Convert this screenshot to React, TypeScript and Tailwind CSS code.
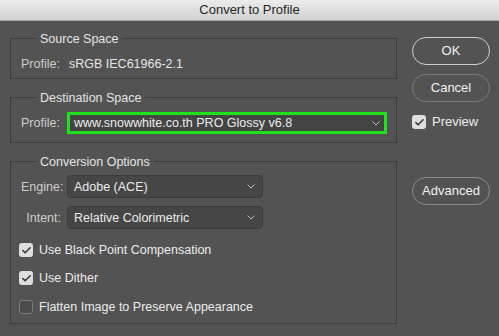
import { Check } from "lucide-react";

function Chevron() {
  return (
    <svg width="8" height="5" viewBox="0 0 8 5" className="shrink-0">
      <polyline points="0.5,0.5 4,4 7.5,0.5" fill="none" stroke="#bdbdbd" strokeWidth="1" />
    </svg>
  );
}

function Select({ value, width, highlight }: { value: string; width: string; highlight?: boolean }) {
  return (
    <div
      className={
        highlight
          ? `flex h-[22px] ${width} items-center justify-between border-[3px] border-[#1fe21f] bg-[#444444] pl-[4px] pr-[4px]`
          : `flex h-[23px] ${width} items-center justify-between rounded-[4px] border border-[#3b3b3b] bg-[#464646] pl-[6px] pr-[7px]`
      }
    >
      <span className="text-[#ececec]">{value}</span>
      <Chevron />
    </div>
  );
}

function CheckBox({ checked }: { checked: boolean }) {
  return checked ? (
    <span className="flex h-[14px] w-[14px] items-center justify-center rounded-[3px] bg-[#dedede]">
      <Check size={11} strokeWidth={3.5} color="#3a3a3a" />
    </span>
  ) : (
    <span className="h-[14px] w-[14px] rounded-[3px] border border-[#7c7c7c] bg-[#4b4b4b]" />
  );
}

function Group({ title, className, children }: { title: string; className: string; children: React.ReactNode }) {
  return (
    <fieldset className={`w-[387px] border border-[#3d3d3d] pl-[10px] ${className}`}>
      <legend className="ml-[15px] px-[4px] leading-[16px] text-[#e4e4e4]">
        <span className="relative top-[1px]">{title}</span>
      </legend>
      {children}
    </fieldset>
  );
}

const buttons = "flex h-[28px] w-[78px] items-center justify-center rounded-full text-[13px] text-[#f2f2f2]";

export default function App() {
  return (
    <div className="h-[336px] w-[499px] overflow-hidden bg-[#535353] text-[12.5px] leading-[16px] font-['Liberation_Sans',Arial,sans-serif]">
      <div className="flex h-[21px] items-center justify-center border-b border-[#a8a8a8] bg-gradient-to-b from-[#ececec] to-[#d2d2d2] text-[13px] text-[#262626]">
        Convert to Profile
      </div>
      <div className="flex">
        <div className="ml-[10px] flex flex-col">
          <Group title="Source Space" className="mt-[9px] pt-[10px] pb-[6px]">
            <div className="flex">
              <span className="w-[40px] text-[#cdcdcd]">Profile:</span>
              <span className="ml-[8px] text-[#e6e6e6]">sRGB IEC61966-2.1</span>
            </div>
          </Group>
          <Group title="Destination Space" className="mt-[10px] pt-[7px] pb-[8px]">
            <div className="flex items-center gap-[6px]">
              <span className="w-[40px] text-[#cdcdcd]">Profile:</span>
              <Select value="www.snowwhite.co.th PRO Glossy v6.8" width="w-[320px]" highlight />
            </div>
          </Group>
          <Group title="Conversion Options" className="mt-[10px] pt-[6px] pb-[8px]">
            <div className="flex flex-col">
              <div className="flex items-center gap-[6px]">
                <span className="w-[40px] text-right text-[#cdcdcd]">Engine:</span>
                <Select value="Adobe (ACE)" width="w-[196px]" />
              </div>
              <div className="mt-[8px] flex items-center gap-[6px]">
                <span className="w-[40px] text-right text-[#cdcdcd]">Intent:</span>
                <Select value="Relative Colorimetric" width="w-[196px]" />
              </div>
              <div className="mt-[13px] ml-[-2px] flex flex-col gap-[12px]">
                <label className="flex items-center gap-[6px] text-[#ececec]">
                  <CheckBox checked />
                  Use Black Point Compensation
                </label>
                <label className="flex items-center gap-[6px] text-[#ececec]">
                  <CheckBox checked />
                  Use Dither
                </label>
                <label className="mt-[1px] flex items-center gap-[6px] text-[#ececec]">
                  <CheckBox checked={false} />
                  Flatten Image to Preserve Appearance
                </label>
              </div>
            </div>
          </Group>
        </div>
        <div className="ml-[15px] flex flex-col">
          <button className={`${buttons} mt-[16px] border-[1.5px] border-[#cfcfcf]`}>OK</button>
          <button className={`${buttons} mt-[9px] border border-[#7a7a7a]`}>Cancel</button>
          <label className="mt-[12px] flex items-center gap-[6px] text-[13px] text-[#ececec]">
            <CheckBox checked />
            Preview
          </label>
          <button className={`${buttons} mt-[47px] border border-[#8a8a8a]`}>Advanced</button>
        </div>
      </div>
    </div>
  );
}
